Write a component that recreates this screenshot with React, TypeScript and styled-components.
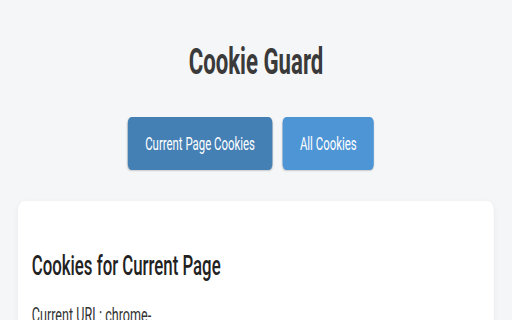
import { useState } from "react";
import styled, { createGlobalStyle } from "styled-components";

// the shot is squeezed sideways, so the page is laid out wide and scaled on x
const SQUEEZE = 0.6;

const GlobalStyle = createGlobalStyle`
  html, body {
    margin: 0;
    padding: 0;
    background: #f5f6f8;
    overflow: hidden;
  }
  body {
    font-family: Roboto, "Liberation Sans", Arial, sans-serif;
  }
`;

const App = () => {
  const [tab, setTab] = useState<"current" | "all">("current");

  return (
    <>
      <GlobalStyle />
      <Stage>
        <Title>Cookie Guard</Title>
        <Tabs>
          <TabButton $active={tab === "current"} onClick={() => setTab("current")}>
            Current Page Cookies
          </TabButton>
          <TabButton $active={tab === "all"} onClick={() => setTab("all")}>
            All Cookies
          </TabButton>
        </Tabs>
        <Card>
          <CardTitle>Cookies for Current Page</CardTitle>
          <Url>
            Current URL: chrome-extension://lkbcdmfgpbnhpjcnkgafohdlnmjaeoib/popup.html
          </Url>
        </Card>
      </Stage>
    </>
  );
};
export default App;

const Stage = styled.div`
  width: ${512 / SQUEEZE}px;
  transform: scaleX(${SQUEEZE});
  transform-origin: 0 0;
  box-sizing: border-box;
  padding: 40px 30px 0;
`;

const Title = styled.h1`
  margin: 0;
  text-align: center;
  font-size: 37px;
  font-weight: 700;
  color: #3a3a3a;
`;

const Tabs = styled.div`
  display: flex;
  justify-content: center;
  margin-top: 34px;
`;

const TabButton = styled.button<{ $active?: boolean }>`
  font-family: Roboto, "Liberation Sans", Arial, sans-serif;
  font-size: 19px;
  line-height: 21px;
  padding: 16px 29px;
  margin-right: 17px;
  border: none;
  border-radius: 6px;
  color: #ffffff;
  cursor: pointer;
  background: ${(p) => (p.$active ? "#4580b5" : "#4e95d6")};
  box-shadow: 0 1px 2px rgba(0, 0, 0, 0.18);
`;

const Card = styled.div`
  margin-top: 31px;
  background: #ffffff;
  border-radius: 10px;
  padding: 48px 23px 24px;
  box-shadow: 0 2px 8px rgba(0, 0, 0, 0.06);
`;

const CardTitle = styled.h2`
  margin: 0 0 21px;
  font-size: 28px;
  font-weight: 500;
  color: #222222;
`;

const Url = styled.p`
  margin: 0;
  font-size: 21px;
  color: #333333;
`;
